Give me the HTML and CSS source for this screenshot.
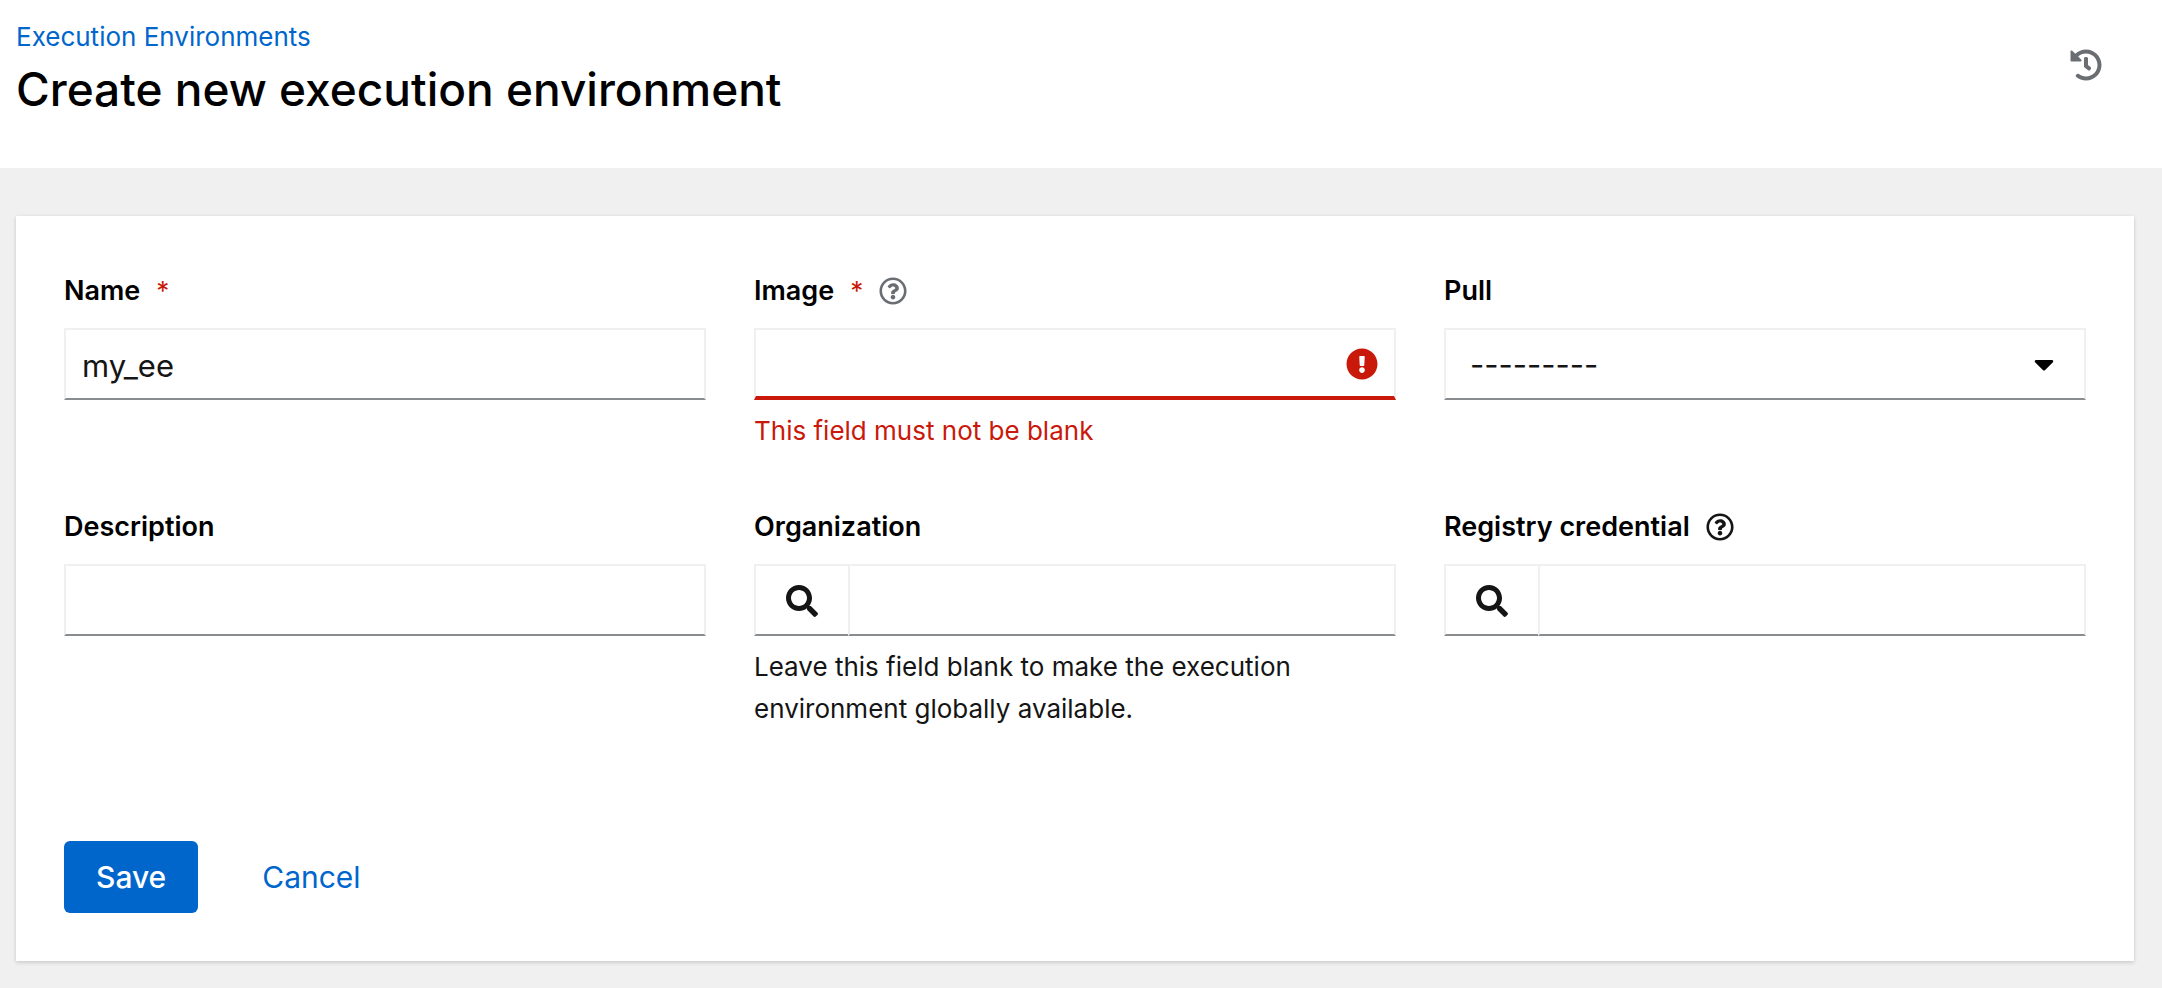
FILE: index.html
```html
<!DOCTYPE html>
<html lang="en">
<head>
<meta charset="utf-8">
<meta name="viewport" content="width=device-width, initial-scale=1">
<title>Create new execution environment</title>
<link rel="stylesheet" href="styles.css">
</head>
<body>
<svg class="sprite" aria-hidden="true">
  <symbol id="icon-history" viewBox="0 0 512 512"><path d="M504 255.531c.253 136.64-111.18 248.372-247.82 248.468-59.015.042-113.223-20.53-155.822-54.911-11.077-8.94-11.905-25.541-1.839-35.607l11.267-11.267c8.609-8.609 22.353-9.551 31.891-1.984C173.062 425.135 212.781 440 256 440c101.705 0 184-82.311 184-184 0-101.705-82.311-184-184-184-48.814 0-93.149 18.969-126.068 49.932l50.754 50.754c10.08 10.08 2.941 27.314-11.313 27.314H24c-8.837 0-16-7.163-16-16V38.627c0-14.254 17.234-21.393 27.314-11.314l49.372 49.372C129.209 34.136 189.552 8 256 8c136.81 0 247.747 110.781 248 247.531zm-180.912 78.784l9.823-12.63c8.138-10.463 6.253-25.542-4.21-33.679L288 256.349V152c0-13.255-10.745-24-24-24h-16c-13.255 0-24 10.745-24 24v135.651l65.409 50.874c10.463 8.137 25.541 6.253 33.679-4.21z"/></symbol>
  <symbol id="icon-help" viewBox="0 0 512 512"><path d="M256 8C119.043 8 8 119.083 8 256c0 136.997 111.043 248 248 248s248-111.003 248-248C504 119.083 392.957 8 256 8zm0 448c-110.532 0-200-89.431-200-200 0-110.495 89.472-200 200-200 110.491 0 200 89.471 200 200 0 110.53-89.431 200-200 200zm107.244-255.2c0 67.052-72.421 68.084-72.421 92.863V300c0 6.627-5.373 12-12 12h-45.647c-6.627 0-12-5.373-12-12v-8.659c0-35.745 27.1-50.034 47.579-61.516 17.561-9.845 28.324-16.541 28.324-29.579 0-17.246-21.999-28.693-39.784-28.693-23.189 0-33.894 10.977-48.942 29.969-4.057 5.12-11.46 6.071-16.666 2.124l-27.824-21.098c-5.107-3.872-6.251-11.066-2.644-16.363C184.846 131.491 214.94 112 261.794 112c49.071 0 101.45 38.304 101.45 88.8zM298 368c0 23.159-18.841 42-42 42s-42-18.841-42-42 18.841-42 42-42 42 18.841 42 42z"/></symbol>
  <symbol id="icon-error" viewBox="0 0 512 512"><path d="M504 256c0 136.997-111.043 248-248 248S8 392.997 8 256C8 119.083 119.043 8 256 8s248 111.083 248 248zm-248 50c-25.405 0-46 20.595-46 46s20.595 46 46 46 46-20.595 46-46-20.595-46-46-46zm-43.673-165.346l7.418 136c.347 6.364 5.609 11.346 11.982 11.346h48.546c6.373 0 11.635-4.982 11.982-11.346l7.418-136c.375-6.874-5.098-12.654-11.982-12.654h-63.383c-6.884 0-12.356 5.78-11.981 12.654z"/></symbol>
  <symbol id="icon-search" viewBox="0 0 512 512"><path d="M505 442.7L405.3 343c-4.5-4.5-10.6-7-17-7H372c27.6-35.3 44-79.7 44-128C416 93.1 322.9 0 208 0S0 93.1 0 208s93.1 208 208 208c48.3 0 92.7-16.4 128-44v16.3c0 6.4 2.5 12.5 7 17l99.7 99.7c9.4 9.4 24.6 9.4 33.9 0l28.3-28.3c9.4-9.4 9.4-24.6.1-34zM208 336c-70.7 0-128-57.2-128-128 0-70.7 57.2-128 128-128 70.7 0 128 57.2 128 128 0 70.7-57.2 128-128 128z"/></symbol>
  <symbol id="icon-caret" viewBox="0 0 320 512"><path d="M31.3 192h257.3c17.8 0 26.7 21.5 14.1 34.1L174.1 354.8c-7.8 7.8-20.5 7.8-28.3 0L17.2 226.1C4.6 213.5 13.5 192 31.3 192z"/></symbol>
</svg>

<header class="page-header">
  <div>
    <nav aria-label="Breadcrumb"><a class="breadcrumb" href="#">Execution Environments</a></nav>
    <h1 class="title">Create new execution environment</h1>
  </div>
  <button class="icon-button history" type="button" aria-label="View activity stream"><svg class="icon"><use href="#icon-history"/></svg></button>
</header>

<main class="content">
  <form class="card">
    <div class="fields">
      <div class="field">
        <div class="field-label">
          <label for="name">Name</label><span class="required" aria-hidden="true">*</span>
        </div>
        <input class="control" id="name" type="text" value="my_ee" required>
      </div>

      <div class="field">
        <div class="field-label">
          <label for="image">Image</label><span class="required" aria-hidden="true">*</span>
          <button class="icon-button help muted" type="button" aria-label="More information about image"><svg class="icon icon-small"><use href="#icon-help"/></svg></button>
        </div>
        <div class="control-wrap">
          <input class="control invalid" id="image" type="text" aria-invalid="true" aria-describedby="image-error">
          <svg class="icon error-icon" aria-hidden="true"><use href="#icon-error"/></svg>
        </div>
        <p class="message error" id="image-error">This field must not be blank</p>
      </div>

      <div class="field">
        <div class="field-label"><label for="pull">Pull</label></div>
        <div class="control-wrap">
          <select class="control select" id="pull"><option>---------</option></select>
          <svg class="caret" aria-hidden="true"><use href="#icon-caret"/></svg>
        </div>
      </div>

      <div class="field">
        <div class="field-label"><label for="description">Description</label></div>
        <input class="control" id="description" type="text">
      </div>

      <div class="field">
        <div class="field-label"><label for="organization">Organization</label></div>
        <div class="input-group">
          <button class="control search" type="button" aria-label="Search organizations"><svg class="icon"><use href="#icon-search"/></svg></button>
          <input class="control" id="organization" type="text" aria-describedby="organization-help">
        </div>
        <p class="message" id="organization-help">Leave this field blank to make the execution environment globally available.</p>
      </div>

      <div class="field">
        <div class="field-label">
          <label for="credential">Registry credential</label>
          <button class="icon-button help" type="button" aria-label="More information about registry credential"><svg class="icon icon-small"><use href="#icon-help"/></svg></button>
        </div>
        <div class="input-group">
          <button class="control search" type="button" aria-label="Search credentials"><svg class="icon"><use href="#icon-search"/></svg></button>
          <input class="control" id="credential" type="text">
        </div>
      </div>
    </div>

    <div class="actions">
      <button class="button primary" type="submit">Save</button>
      <button class="button link" type="button">Cancel</button>
    </div>
  </form>
</main>
</body>
</html>
```

FILE: styles.css
```css
* {
  box-sizing: border-box;
}

body {
  margin: 0;
  min-height: 100vh;
  background: #f0f0f0;
  color: #151515;
  font: 26px/42px Inter, "Liberation Sans", sans-serif;
}

button,
input,
select {
  font: inherit;
  color: inherit;
}

button {
  padding: 0;
  border: 0;
  background: none;
}

.sprite {
  display: none;
}

.icon {
  display: block;
  width: 32px;
  height: 32px;
  fill: currentColor;
}

.icon-small {
  width: 28px;
  height: 28px;
}

.page-header {
  display: flex;
  justify-content: space-between;
  align-items: flex-start;
  padding: 16px 60px 48px 16px;
  background: #fff;
}

.breadcrumb {
  display: block;
  color: #06c;
  text-decoration: none;
}

.title {
  margin: 0;
  color: #000;
  font-size: 46px;
  font-weight: 500;
  line-height: 62px;
}

.history {
  margin-top: 33px;
  color: #6a6e73;
}

.content {
  padding: 48px 28px 28px 16px;
}

.card {
  padding: 48px;
  background: #fff;
  box-shadow: 0 2px 4px rgba(3, 3, 3, 0.12), 0 0 4px rgba(3, 3, 3, 0.06);
}

.fields {
  display: grid;
  grid-template-columns: repeat(3, minmax(0, 1fr));
  gap: 48px;
}

.field-label {
  display: flex;
  align-items: center;
  height: 54px;
  margin-bottom: 10px;
  color: #000;
  font-size: 27px;
  font-weight: 600;
}

.required {
  margin-left: 16px;
  color: #c9190b;
  font-size: 26px;
  font-weight: 400;
}

.help {
  margin-left: 16px;
  color: #151515;
}

.muted {
  color: #6a6e73;
}

.control {
  display: block;
  width: 100%;
  min-width: 0;
  height: 72px;
  padding: 2px 16px 0;
  border: 2px solid #f0f0f0;
  border-bottom-color: #8a8d90;
  border-radius: 0;
  background: #fff;
  font-size: 31px;
}

.invalid {
  padding-right: 64px;
  border-bottom: 4px solid #c9190b;
}

.control-wrap {
  position: relative;
}

.error-icon {
  position: absolute;
  top: 20px;
  right: 18px;
  color: #c9190b;
}

.select {
  padding: 2px 24px 0;
  appearance: none;
}

.caret {
  position: absolute;
  top: 20px;
  right: 32px;
  width: 20px;
  height: 32px;
  fill: #000;
  pointer-events: none;
}

.input-group {
  display: flex;
}

.search {
  display: flex;
  flex: 0 0 96px;
  justify-content: center;
  align-items: center;
  margin-right: -2px;
}

.message {
  margin: 10px 0 0;
}

.error {
  color: #c9190b;
}

.actions {
  display: flex;
  gap: 32px;
  margin-top: 111px;
}

.button {
  height: 72px;
  padding: 0 32px;
  border-radius: 6px;
  font-size: 30px;
}

.primary {
  background: #06c;
  color: #fff;
  font-weight: 500;
}

.link {
  color: #06c;
}
```
